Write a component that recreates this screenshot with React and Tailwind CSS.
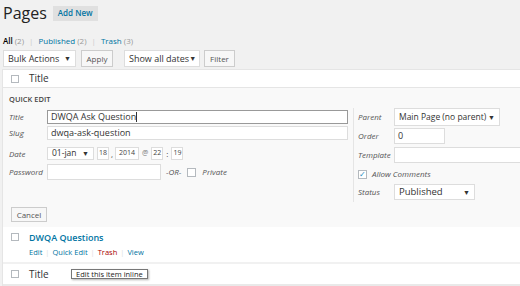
import React from 'react';

const Caret = () => <span className="text-[7px] text-[#333] leading-none">▼</span>;

const Box = ({ className = '' }) => (
  <span className={`inline-block w-[8px] h-[8px] border border-[#b4b9be] bg-white ${className}`}></span>
);

const Field = ({ label, children, labelW = 'w-[38px]', className = '' }) => (
  <div className={`flex items-center ${className}`}>
    <span className={`${labelW} shrink-0 italic text-[8px] text-[#555]`}>{label}</span>
    {children}
  </div>
);

const App = () => {
  return (
    <div className="w-[520px] h-[286px] overflow-hidden whitespace-nowrap bg-[#f1f1f1] text-[#444] [font-stretch:90%] font-['Open_Sans',_'Liberation_Sans',_sans-serif]">
      {/* heading */}
      <div className="flex items-center pl-[3px] pt-[2px] h-[24px]">
        <h1 className="text-[16px] text-[#222] leading-none">Pages</h1>
        <button className="ml-[6px] h-[15px] px-[5px] bg-[#e0e0e0] text-[#0074a2] text-[8px] font-semibold leading-none">Add New</button>
      </div>

      <div className="mt-[11px] pl-[3px] text-[8px] leading-[12px] flex items-center gap-[2px]">
        <span className="text-[#000] font-semibold">All</span><span className="text-[#999]">(2)</span>
        <span className="text-[#ccc] mx-[3px]">|</span>
        <span className="text-[#0074a2]">Published</span><span className="text-[#999]">(2)</span>
        <span className="text-[#ccc] mx-[3px]">|</span>
        <span className="text-[#0074a2]">Trash</span><span className="text-[#999]">(3)</span>
      </div>

      {/* toolbar */}
      <div className="mt-[3px] flex items-center pl-[3px] h-[17px] text-[9px] text-[#333]">
        <div className="w-[73px] h-[17px] bg-white border border-[#ddd] flex items-center justify-between px-[4px]">
          <span>Bulk Actions</span><Caret />
        </div>
        <button className="ml-[5px] w-[32px] h-[17px] bg-[#f7f7f7] border border-[#ccc] text-[8px] text-[#555]">Apply</button>
        <div className="ml-[11px] w-[76px] h-[17px] bg-white border border-[#ddd] flex items-center justify-between px-[4px]">
          <span>Show all dates</span><Caret />
        </div>
        <button className="ml-[4px] w-[31px] h-[17px] bg-[#f7f7f7] border border-[#ccc] text-[8px] text-[#555]">Filter</button>
      </div>

      {/* table */}
      <div className="mt-[2px] ml-[2px] bg-white border-l border-t border-[#e5e5e5]">
        <div className="h-[18px] flex items-center pl-[8px] border-b border-[#e5e5e5]">
          <Box />
          <span className="ml-[10px] text-[10px] text-[#333]">Title</span>
        </div>

        {/* quick edit */}
        <div className="h-[139px] bg-[#f9f9f9] flex flex-col">
          <div className="flex">
            <div className="w-[345px] pl-[6px]">
              <div className="mt-[5px] text-[7.5px] font-semibold text-[#444] leading-[12px]">QUICK EDIT</div>
              <Field label="Title" className="mt-[5px] h-[14px]">
                <div className="w-[301px] h-[14px] bg-white border border-[#999] flex items-center pl-[3px] text-[9px] text-[#333]">
                  DWQA Ask Question<span className="w-px h-[10px] bg-[#333]"></span>
                </div>
              </Field>
              <Field label="Slug" className="mt-[2px] h-[14px]">
                <div className="w-[301px] h-[14px] bg-white border border-[#ddd] flex items-center pl-[3px] text-[9px] text-[#333]">dwqa-ask-question</div>
              </Field>
              <Field label="Date" className="mt-[7px] h-[13px]">
                <div className="w-[47px] h-[13px] bg-white border border-[#ddd] flex items-center justify-between px-[4px] text-[8.5px] text-[#333]">
                  <span>01-jan</span><Caret />
                </div>
                <div className="ml-[3px] w-[12px] h-[13px] bg-white border border-[#ddd] text-[7px] flex items-center justify-center">18</div>
                <span className="text-[8px] mx-[2px]">,</span>
                <div className="w-[24px] h-[13px] bg-white border border-[#ddd] text-[7px] flex items-center justify-center">2014</div>
                <span className="text-[7px] mx-[3px] text-[#777]">@</span>
                <div className="w-[12px] h-[13px] bg-white border border-[#ddd] text-[7px] flex items-center justify-center">22</div>
                <span className="text-[8px] mx-[3px]">:</span>
                <div className="w-[12px] h-[13px] bg-white border border-[#ddd] text-[7px] flex items-center justify-center">19</div>
              </Field>
              <Field label="Password" className="mt-[4px] h-[16px]">
                <div className="w-[114px] h-[16px] bg-white border border-[#ddd]"></div>
                <span className="ml-[5px] italic text-[8px] text-[#555]">-OR-</span>
                <Box className="ml-[6px] !w-[9px] !h-[9px]" />
                <span className="ml-[6px] italic text-[8px] text-[#555]">Private</span>
              </Field>
            </div>
            <div className="ml-[5px] mt-[20px] h-[94px] border-l border-[#e5e5e5] pl-[4px] flex-1">
              <Field label="Parent" labelW="w-[36px]" className="h-[18px]">
                <div className="w-[106px] h-[18px] bg-white border border-[#ddd] flex items-center justify-between px-[4px] text-[8.5px] text-[#333]">
                  <span>Main Page (no parent)</span><Caret />
                </div>
              </Field>
              <Field label="Order" labelW="w-[36px]" className="mt-[2px] h-[16px]">
                <div className="w-[51px] h-[16px] bg-white border border-[#ddd] flex items-center pl-[3px] text-[9px] text-[#333]">0</div>
              </Field>
              <Field label="Template" labelW="w-[36px]" className="mt-[3px] h-[16px]">
                <div className="flex-1 h-[16px] bg-white border border-[#ddd] border-r-0"></div>
              </Field>
              <div className="mt-[6px] flex items-center h-[10px]">
                <span className="w-[9px] h-[9px] border border-[#b4b9be] bg-white flex items-center justify-center text-[8px] text-[#1e8cbe] leading-none">✓</span>
                <span className="ml-[5px] italic text-[8px] text-[#555]">Allow Comments</span>
              </div>
              <Field label="Status" labelW="w-[36px]" className="mt-[5px] h-[16px]">
                <div className="w-[81px] h-[16px] bg-white border border-[#ddd] flex items-center justify-between px-[4px] text-[9.5px] text-[#333]">
                  <span>Published</span><Caret />
                </div>
              </Field>
            </div>
          </div>
          <div className="mt-[5px] pl-[8px] flex">
            <button className="w-[36px] h-[15px] bg-[#f7f7f7] border border-[#ccc] text-[8px] text-[#555] leading-none">Cancel</button>
          </div>
        </div>

        {/* row */}
        <div className="h-[37px] border-b-2 border-[#f1f1f1] flex pl-[8px] pt-[5px]">
          <Box className="mt-[1px]" />
          <div className="ml-[10px]">
            <div className="text-[9px] font-semibold text-[#0074a2] leading-[12px]">DWQA Questions</div>
            <div className="mt-[3px] text-[7.5px] leading-[10px] flex gap-[3px]">
              <span className="text-[#0074a2]">Edit</span><span className="text-[#ddd]">|</span>
              <span className="text-[#0074a2]">Quick Edit</span><span className="text-[#ddd]">|</span>
              <span className="text-[#a00]">Trash</span><span className="text-[#ddd]">|</span>
              <span className="text-[#0074a2]">View</span>
            </div>
          </div>
        </div>

        <div className="h-[22px] border-b-2 border-[#e9e9e9] flex items-center pl-[8px] relative">
          <Box />
          <span className="ml-[10px] text-[10px] text-[#333]">Title</span>
          <div className="absolute left-[68px] top-[5px] h-[10px] px-[4px] bg-white border border-[#777] shadow-[1px_1px_2px_rgba(0,0,0,0.3)] text-[7.5px] text-[#222] leading-[8px]">Edit this item inline</div>
        </div>
      </div>
    </div>
  );
};

export default App;
